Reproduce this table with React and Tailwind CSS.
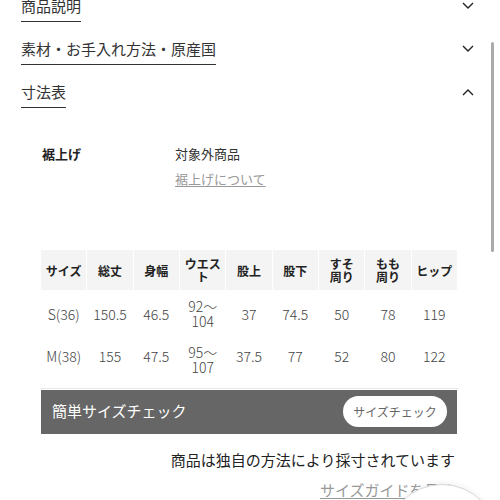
import React from "react";

const font = { fontFamily: '"Noto Sans CJK JP", "Noto Sans", sans-serif' };

const Chevron = ({ up }) => (
  <svg width="12" height="8" viewBox="0 0 12 8" className="mr-[5px]">
    <polyline
      points={up ? "1,7 6,2 11,7" : "1,1 6,6 11,1"}
      fill="none"
      stroke="#222"
      strokeWidth="1.4"
    />
  </svg>
);

const sections = [
  { title: "商品説明", open: false },
  { title: "素材・お手入れ方法・原産国", open: false },
  { title: "寸法表", open: true },
];

const headers = [
  "サイズ",
  "総丈",
  "身幅",
  <>ウエス<br />ト</>,
  "股上",
  "股下",
  <>すそ<br />周り</>,
  <>もも<br />周り</>,
  "ヒップ",
];

const rows = [
  ["S(36)", "150.5", "46.5", <>92〜<br />104</>, "37", "74.5", "50", "78", "119"],
  ["M(38)", "155", "47.5", <>95〜<br />107</>, "37.5", "77", "52", "80", "122"],
];

export default function App() {
  return (
    <div className="relative h-[500px] w-[500px] overflow-hidden bg-white text-[#333]" style={font}>
      {/* accordion headers */}
      <div className="-mt-[21px] pl-[21px] pr-[21px]">
        {sections.map((s) => (
          <div key={s.title} className="flex h-[43px] items-end justify-between">
            <span className="border-b border-[#333] pb-[6px] text-[15px] leading-[19px]">{s.title}</span>
            <div className="flex h-[26px] items-start pt-[6px]">
              <Chevron up={s.open} />
            </div>
          </div>
        ))}
      </div>

      {/* hem */}
      <div className="mt-[37px] flex pl-[42px] text-[13px] leading-[18px]">
        <div className="w-[133px] font-bold text-[#222]">裾上げ</div>
        <div className="flex flex-col gap-[7px]">
          <span>対象外商品</span>
          <span className="text-[#999] underline underline-offset-2">裾上げについて</span>
        </div>
      </div>

      {/* size table */}
      <div className="mt-[62px] pl-[40px]">
        <table className="w-[418px] table-fixed border-collapse text-center">
          <thead>
            <tr className="h-[40px] bg-[#f4f4f4]">
              {headers.map((h, i) => (
                <th key={i} className="border-x border-white px-0 text-[12px] font-bold leading-[13px] text-[#222]">
                  {h}
                </th>
              ))}
            </tr>
          </thead>
          <tbody>
            {rows.map((r, ri) => (
              <tr key={ri} className={ri === 1 ? "h-[53px] border-b border-[#e8e8e8] align-top" : "h-[45px]"}>
                {r.map((c, ci) => (
                  <td
                    key={ci}
                    className={
                      "text-[14px] font-light text-[#444] " +
                      (ci === 3 ? "leading-[15px] " : "leading-[18px] ") +
                      (ri === 1 ? (ci === 3 ? "pt-[10px]" : "pt-[12px]") : "pt-[2px]")
                    }
                  >
                    {c}
                  </td>
                ))}
              </tr>
            ))}
          </tbody>
        </table>
      </div>

      {/* quick size check bar */}
      <div className="ml-[41px] mt-[1px] flex h-[44px] w-[416px] items-center justify-between bg-[#666] pl-[11px] pr-[10px]">
        <span className="text-[15px] text-white">簡単サイズチェック</span>
        <button className="h-[31px] w-[104px] rounded-full bg-white text-[12px] text-[#666]">サイズチェック</button>
      </div>

      <div className="mt-[16px] pr-[45px] text-right text-[15px] leading-[20px] text-[#222]">
        商品は独自の方法により採寸されています
      </div>

      <div className="mt-[10px] pl-[320px] text-[15px] leading-[20px] text-[#999] underline underline-offset-2">
        サイズガイドを見る
      </div>

      {/* floating circle button */}
      <div className="absolute left-[386px] top-[484px] h-[112px] w-[112px] rounded-full border border-[#d8d8d8] bg-white shadow-[0_0_6px_rgba(0,0,0,0.08)]" />

      {/* scrollbar */}
      <div className="absolute left-[491px] top-[42px] h-[210px] w-[3px] rounded-full bg-[#aaa]" />
    </div>
  );
}
